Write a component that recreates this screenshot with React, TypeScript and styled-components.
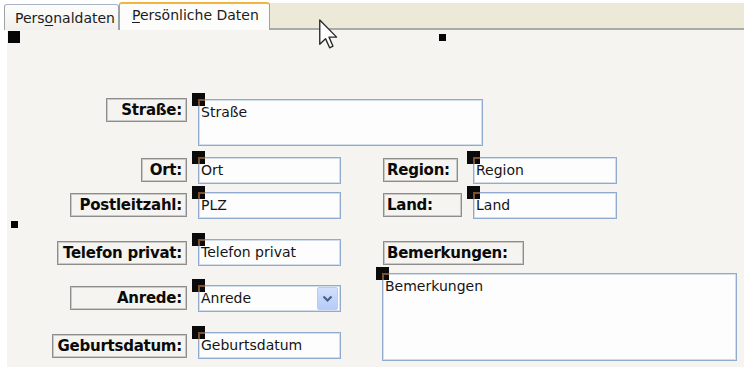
import React from "react";
import styled, { createGlobalStyle } from "styled-components";

const GlobalStyle = createGlobalStyle`
  html, body { margin: 0; padding: 0; background: #ffffff; }
  body { font-family: "DejaVu Sans", "Liberation Sans", sans-serif; }
  * { box-sizing: border-box; }
`;

const Page = styled.div`
  position: relative;
  width: 750px;
  height: 374px;
  padding-left: 4px;
  overflow: hidden;
  background: #ffffff;
`;

const Window = styled.div`
  width: 740px;
`;

const TabStrip = styled.div`
  display: flex;
  align-items: flex-end;
  height: 30px;
  padding-top: 2px;
`;

const Tab = styled.div<{ $active?: boolean; $w: number }>`
  width: ${(p) => p.$w}px;
  height: ${(p) => (p.$active ? 28 : 26)}px;
  padding-left: ${(p) => (p.$active ? 12 : 10)}px;
  padding-top: ${(p) => (p.$active ? 3 : 5)}px;
  font-size: 14px;
  line-height: 16px;
  color: #1c1c1c;
  white-space: nowrap;
  border: 1px solid #9aa3a8;
  border-bottom: none;
  border-top: ${(p) => (p.$active ? "2px solid #f2b543" : "1px solid #a8b4c4")};
  border-radius: 3px 3px 0 0;
  background: ${(p) =>
    p.$active ? "#fcfcfb" : "linear-gradient(#fdfdfd, #f1f0ec)"};
  u { text-decoration-thickness: 1px; text-underline-offset: 2px; }
`;

const TabFiller = styled.div`
  flex: 1;
  height: 27px;
  background: #ece9d8;
  border-bottom: 2px solid #a9aba6;
`;

const Canvas = styled.div`
  position: relative;
  margin-left: 3px;
  width: 737px;
  height: 337px;
  background: #f5f4f0;
  display: grid;
  grid-template-columns: 180px 11px 143px 41px 91px 10px 134px 120px;
  grid-template-rows: 59px 35px 47px 34px 12px 47px 28px;
  align-content: start;
  padding-top: 68px;
`;

const Handle = styled.div<{ $x: number; $y: number; $s: number }>`
  position: absolute;
  left: ${(p) => p.$x}px;
  top: ${(p) => p.$y}px;
  width: ${(p) => p.$s}px;
  height: ${(p) => p.$s}px;
  background: #050505;
`;

const Label = styled.div<{
  $col: string;
  $row: string;
  $w: number;
  $mt: number;
  $side: "start" | "end";
}>`
  grid-column: ${(p) => p.$col};
  grid-row: ${(p) => p.$row};
  justify-self: ${(p) => p.$side};
  align-self: start;
  margin-top: ${(p) => p.$mt}px;
  margin-left: ${(p) => (p.$side === "start" ? 1 : 0)}px;
  width: ${(p) => p.$w}px;
  height: 24px;
  display: flex;
  align-items: center;
  justify-content: ${(p) => (p.$side === "end" ? "flex-end" : "flex-start")};
  padding: 0 4px 1px 3px;
  border: 1px solid #8d8d8d;
  box-shadow: inset 0 0 0 1px #c9c9c6;
  font-weight: bold;
  font-size: 15px;
  letter-spacing: -0.25px;
  color: #0a0a0a;
  white-space: nowrap;
`;

const Field = styled.div<{ $col: string; $row: string; $h: number; $mt?: number }>`
  position: relative;
  grid-column: ${(p) => p.$col};
  grid-row: ${(p) => p.$row};
  align-self: start;
  margin-top: ${(p) => p.$mt ?? 0}px;
  height: ${(p) => p.$h}px;
  display: flex;
  align-items: flex-start;
  background: #fdfdfd;
  border: 1px solid #91abcf;
  box-shadow: inset 0 0 0 1px #d3deec;
  font-size: 14px;
  line-height: 16px;
  color: #151515;
`;

const FieldText = styled.span`
  flex: 1;
  padding: 4px 2px 0 2px;
  white-space: nowrap;
`;

const Marker = styled.div`
  position: absolute;
  left: -7px;
  top: -7px;
  width: 13px;
  height: 13px;
  background: #0a0a0a;
  overflow: hidden;
  &::after {
    content: "";
    position: absolute;
    left: 6px;
    top: 6px;
    width: 9px;
    height: 9px;
    border-top: 2px solid #7b5230;
    border-left: 2px solid #7b5230;
  }
`;

const DropButton = styled.div`
  width: 21px;
  height: 23px;
  margin: 1px 2px 0 0;
  border: 1px solid #b9cdf4;
  border-radius: 2px;
  background: linear-gradient(#d3e0fc, #b6cbf7);
  display: flex;
  align-items: center;
  justify-content: center;
`;

const Cursor = styled.svg`
  position: absolute;
  left: 319px;
  top: 19px;
`;

type FieldDef = {
  text: string;
  col: string;
  row: string;
  h: number;
  mt?: number;
  combo?: boolean;
};

type LabelDef = {
  text: string;
  col: string;
  row: string;
  w: number;
  mt: number;
  side: "start" | "end";
};

const labels: LabelDef[] = [
  { text: "Straße:", col: "1", row: "1", w: 81, mt: 0, side: "end" },
  { text: "Ort:", col: "1", row: "2", w: 46, mt: 1, side: "end" },
  { text: "Region:", col: "5", row: "2", w: 75, mt: 1, side: "start" },
  { text: "Postleitzahl:", col: "1", row: "3", w: 117, mt: 1, side: "end" },
  { text: "Land:", col: "5", row: "3", w: 79, mt: 1, side: "start" },
  { text: "Telefon privat:", col: "1", row: "4", w: 130, mt: 2, side: "end" },
  { text: "Bemerkungen:", col: "5 / 8", row: "4", w: 141, mt: 2, side: "start" },
  { text: "Anrede:", col: "1", row: "6", w: 117, mt: 1, side: "end" },
  { text: "Geburtsdatum:", col: "1", row: "7", w: 135, mt: 2, side: "end" },
];

const fields: FieldDef[] = [
  { text: "Straße", col: "3 / 7", row: "1", h: 47, mt: 1 },
  { text: "Ort", col: "3", row: "2", h: 27 },
  { text: "Region", col: "6 / 8", row: "2", h: 27 },
  { text: "PLZ", col: "3", row: "3", h: 27 },
  { text: "Land", col: "6 / 8", row: "3", h: 27 },
  { text: "Telefon privat", col: "3", row: "4", h: 27 },
  { text: "Bemerkungen", col: "5 / 9", row: "5 / 8", h: 88 },
  { text: "Anrede", col: "3", row: "6", h: 27, combo: true },
  { text: "Geburtsdatum", col: "3", row: "7", h: 27 },
];

export default function App() {
  return (
    <>
      <GlobalStyle />
      <Page>
        <Window>
          <TabStrip>
            <Tab $w={115}>
              Pers<u>o</u>naldaten
            </Tab>
            <Tab $active $w={151}>
              <u>P</u>ersönliche Daten
            </Tab>
            <TabFiller />
          </TabStrip>
          <Canvas>
            <Handle $x={1} $y={1} $s={12} />
            <Handle $x={432} $y={4} $s={7} />
            <Handle $x={4} $y={191} $s={7} />
            {labels.map((l) => (
              <Label
                key={l.text}
                $col={l.col}
                $row={l.row}
                $w={l.w}
                $mt={l.mt}
                $side={l.side}
              >
                {l.text}
              </Label>
            ))}
            {fields.map((f) => (
              <Field key={f.text} $col={f.col} $row={f.row} $h={f.h} $mt={f.mt}>
                <FieldText>{f.text}</FieldText>
                {f.combo && (
                  <DropButton>
                    <svg width="11" height="8" viewBox="0 0 11 8">
                      <path
                        d="M1.5 1.5 L5.5 5.5 L9.5 1.5"
                        fill="none"
                        stroke="#4a5f8c"
                        strokeWidth="2.2"
                      />
                    </svg>
                  </DropButton>
                )}
                <Marker />
              </Field>
            ))}
          </Canvas>
        </Window>
        <Cursor width="19" height="30" viewBox="0 0 12.5 19.5">
          <path
            d="M0.5 0.5 L0.5 16.5 L4.3 12.8 L7 18.8 L9.2 17.8 L6.6 11.8 L11.6 11.8 Z"
            fill="#ffffff"
            stroke="#2a2a2a"
            strokeWidth="0.9"
            strokeLinejoin="round"
          />
        </Cursor>
      </Page>
    </>
  );
}
